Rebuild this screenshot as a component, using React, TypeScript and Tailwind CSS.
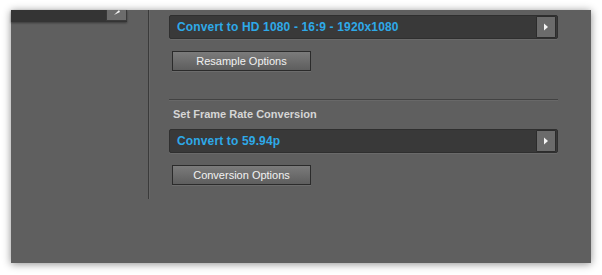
import React from 'react';

function ArrowButton() {
  return (
    <div className="w-[20px] h-[22px] rounded-[2px] bg-[#2c2c2c] p-px mr-[1px]">
      <div className="w-full h-full bg-[#6b6b6b] flex items-center justify-center">
        <svg width="6" height="8" viewBox="0 0 6 8">
          <path d="M1 0.5 L5 4 L1 7.5 Z" fill="#f4f4f4" />
        </svg>
      </div>
    </div>
  );
}

function Dropdown({ label }: { label: string }) {
  return (
    <div className="h-[24px] w-[389px] rounded-[2px] bg-[#393939] border border-[#2f2f2f] shadow-[0_1px_0_#6a6a6a] flex items-center justify-between">
      <span className="pl-[7px] text-[12px] font-bold text-[#2ea9e8] tracking-[0.15px] [font-family:'Liberation_Sans',Arial,sans-serif]">
        {label}
      </span>
      <ArrowButton />
    </div>
  );
}

function OptionButton({ label }: { label: string }) {
  return (
    <button className="ml-[3px] w-[139px] h-[20px] border border-[#2b2b2b] bg-gradient-to-b from-[#7b7b7b] to-[#5e5e5e] shadow-[0_1px_0_#6c6c6c] text-[11px] text-[#f2f2f2] [font-family:'Liberation_Sans',Arial,sans-serif] flex items-center justify-center">
      {label}
    </button>
  );
}

export default function App() {
  return (
    <div className="w-[602px] h-[275px] bg-white pl-[11px] pt-[10px] overflow-hidden">
      <div className="w-[580px] h-[253px] bg-[#5f5f5f] shadow-[0_1px_8px_rgba(0,0,0,0.45)] flex">
        <div className="w-[137px] flex flex-col">
          <div className="w-[116px] h-[12px] bg-[#343434] shadow-[0_1px_2px_rgba(0,0,0,0.4)] flex justify-end">
            <div className="w-[21px] h-[11px] bg-[#6c6c6c] border-x border-b border-[#3a3a3a] flex items-start justify-center">
              <svg width="8" height="6" viewBox="0 0 8 6">
                <path d="M1 5 L6 0 L7 2 Z" fill="#f4f4f4" />
              </svg>
            </div>
          </div>
        </div>
        <div className="w-px h-[189px] bg-[#3a3a3a]" />
        <div className="w-px h-[189px] bg-[#666666]" />
        <div className="pl-[19px] pt-[5px] flex flex-col">
          <Dropdown label="Convert to HD 1080 - 16:9 - 1920x1080" />
          <div className="mt-[12px]">
            <OptionButton label="Resample Options" />
          </div>
          <div className="mt-[28px] w-[389px] h-px bg-[#424242]" />
          <div className="w-[389px] h-px bg-[#686868]" />
          <div className="mt-[6px] pl-[4px] h-[14px] flex items-center text-[11px] font-bold text-[#d6d6d6] [font-family:'Liberation_Sans',Arial,sans-serif]">
            Set Frame Rate Conversion
          </div>
          <div className="mt-[8px]">
            <Dropdown label="Convert to 59.94p" />
          </div>
          <div className="mt-[12px]">
            <OptionButton label="Conversion Options" />
          </div>
        </div>
      </div>
    </div>
  );
}
